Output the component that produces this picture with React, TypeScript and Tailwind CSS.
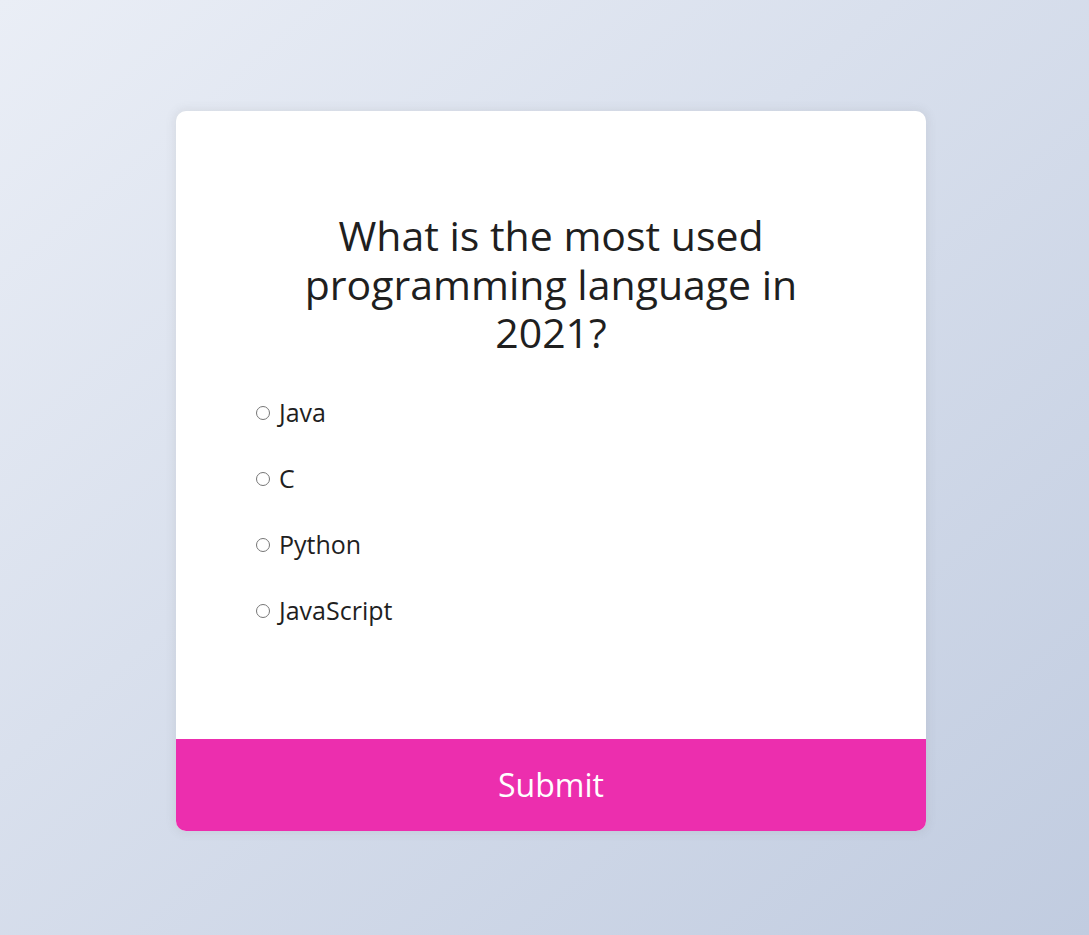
import { useState } from 'react';

const options = ['Java', 'C', 'Python', 'JavaScript'];

export default function App() {
  const [answer, setAnswer] = useState<string | null>(null);

  return (
    <div
      className="min-h-screen h-[935px] bg-linear-to-br from-[#eaeef6] to-[#c1cce0] pt-[111px]"
      style={{ fontFamily: '"Open Sans", "Noto Sans", sans-serif' }}
    >
      <div className="ml-[176px] w-[750px] h-[720px] bg-white rounded-[10px] overflow-hidden shadow-[0_0_10px_2px_rgba(100,100,100,0.1)] flex flex-col">
        {/* Question */}
        <div className="flex-1 pt-[100px] px-[80px]">
          <h2 className="mx-auto max-w-[560px] text-center text-[41px] leading-[48.5px] font-normal text-[#1f1f1f]">
            What is the most used programming language in 2021?
          </h2>
          <ul className="mt-[38px] flex flex-col gap-[30px]">
            {options.map((opt) => (
              <li key={opt} className="h-[36px] flex items-center">
                <label className="flex items-center gap-[9px] cursor-pointer text-[25px] text-[#1f1f1f]">
                  <input
                    type="radio"
                    name="answer"
                    className="m-0 w-[14px] h-[14px] mt-[1px]"
                    checked={answer === opt}
                    onChange={() => setAnswer(opt)}
                  />
                  {opt}
                </label>
              </li>
            ))}
          </ul>
        </div>

        {/* Submit */}
        <button className="h-[92px] w-full bg-[#ec2eae] text-white text-[32px] cursor-pointer">
          Submit
        </button>
      </div>
    </div>
  );
}
